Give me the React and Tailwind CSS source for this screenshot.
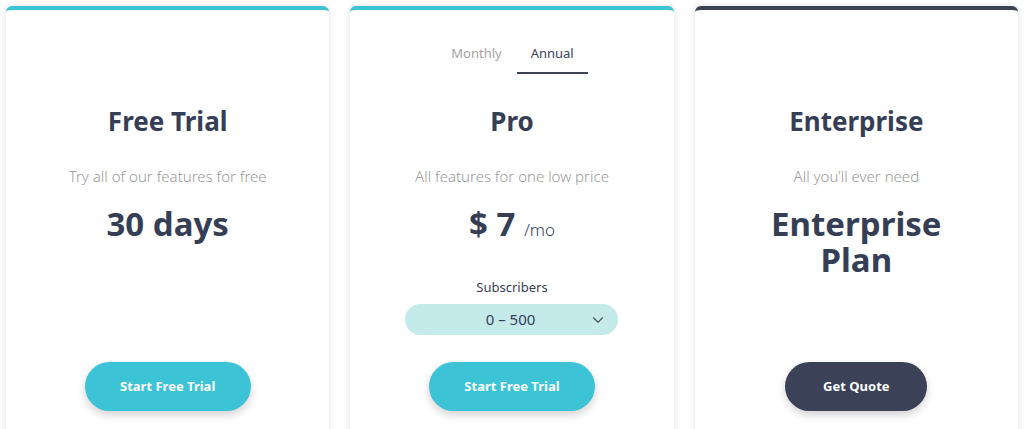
import React from "react";
import { ChevronDown } from "lucide-react";

const font = { fontFamily: '"Noto Sans", "Open Sans", sans-serif' };

function Card({ accent, header, title, subtitle, price, extra, button, buttonClass, buttonW }) {
  return (
    <div className={`flex h-[450px] flex-col items-center rounded-[6px] border-t-4 bg-white shadow-[0_0_6px_rgba(0,0,0,0.13)] ${accent}`}>
      <div className="flex h-[93px] w-full items-start justify-center">{header}</div>
      <h2 className="text-[26px] font-bold leading-[36px] text-[#363e55]">{title}</h2>
      <p className="mt-[26px] text-[15px] font-light leading-[22px] text-[#9a9a9a]">{subtitle}</p>
      <div className="mt-[19px] text-center text-[33px] font-bold leading-[36px] text-[#363e55]">{price}</div>
      {extra}
      <div className="flex-1" />
      <button className={`mb-[45px] h-[49px] ${buttonW} rounded-full text-[13px] font-bold text-white shadow-[0_4px_8px_rgba(0,0,0,0.18)] ${buttonClass}`}>
        {button}
      </button>
    </div>
  );
}

export default function App() {
  return (
    <div className="min-h-[429px] w-[1024px] overflow-hidden bg-white" style={font}>
      <div className="grid grid-cols-3 gap-[21px] pl-[6px] pr-[6px] pt-[6px]">
        <Card
          accent="border-[#3cc4d6]"
          header={null}
          title="Free Trial"
          subtitle="Try all of our features for free"
          price="30 days"
          button="Start Free Trial"
          buttonClass="bg-[#3cc4d6]"
          buttonW="w-[166px]"
        />
        <Card
          accent="border-[#3cc4d6]"
          header={
            <div className="mt-[33px] flex text-[13px] leading-[20px]">
              <div className="border-b-2 border-transparent px-[15px] pb-[9px] text-[#a3a3a8]">Monthly</div>
              <div className="border-b-2 border-[#3b4157] px-[14px] pb-[9px] text-[#3b4157]">Annual</div>
            </div>
          }
          title="Pro"
          subtitle="All features for one low price"
          price={
            <span>
              $ 7 <span className="text-[17px] font-light text-[#363e55]">/mo</span>
            </span>
          }
          extra={
            <div className="flex flex-col items-center">
              <div className="mt-[29px] text-[13px] leading-[20px] text-[#363e55]">Subscribers</div>
              <div className="mt-[7px] flex h-[31px] w-[213px] items-center rounded-full bg-[#c4eaea] pl-[26px] pr-[11px] text-[15px] text-[#363e55]">
                <span className="flex-1 text-center">0 – 500</span>
                <ChevronDown size={18} strokeWidth={1.5} className="text-[#4a5066]" />
              </div>
            </div>
          }
          button="Start Free Trial"
          buttonClass="bg-[#3cc4d6]"
          buttonW="w-[166px]"
        />
        <Card
          accent="border-[#3b4157]"
          header={null}
          title="Enterprise"
          subtitle="All you’ll ever need"
          price={
            <span>
              Enterprise
              <br />
              Plan
            </span>
          }
          button="Get Quote"
          buttonClass="bg-[#3b4157]"
          buttonW="w-[142px]"
        />
      </div>
    </div>
  );
}
